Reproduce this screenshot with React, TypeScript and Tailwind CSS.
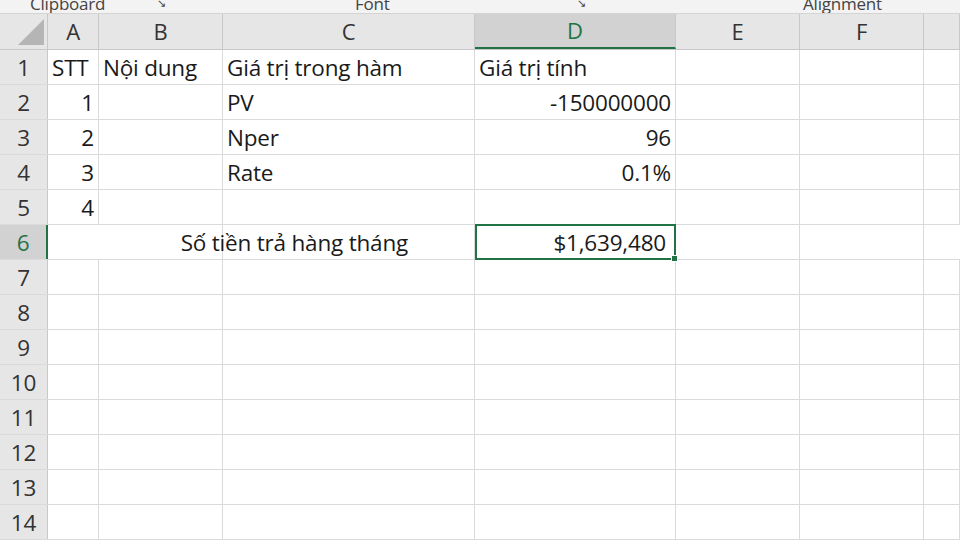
const cols = ['A', 'B', 'C', 'D', 'E', 'F', '']
const widths = ['w-[51px]', 'w-[124px]', 'w-[252px]', 'w-[201px]', 'w-[124px]', 'w-[124px]', 'flex-1']

type Cell = { text?: string; align?: 'left' | 'right' | 'center'; span?: number }

const data: Record<number, Cell[]> = {
  1: [{ text: 'STT' }, { text: 'Nội dung' }, { text: 'Giá trị trong hàm' }, { text: 'Giá trị tính' }],
  2: [{ text: '1', align: 'right' }, {}, { text: 'PV' }, { text: '-150000000', align: 'right' }],
  3: [{ text: '2', align: 'right' }, {}, { text: 'Nper' }, { text: '96', align: 'right' }],
  4: [{ text: '3', align: 'right' }, {}, { text: 'Rate' }, { text: '0.1%', align: 'right' }],
  5: [{ text: '4', align: 'right' }],
}

export default function App() {
  const rows = Array.from({ length: 14 }, (_, i) => i + 1)
  return (
    <div className="w-[960px] h-[540px] overflow-hidden bg-white text-[22.5px] text-[#1a1a1a] tracking-[-0.2px]" style={{ fontFamily: '"Open Sans", sans-serif' }}>
      {/* ribbon group labels, cut off at the top edge */}
      <div className="h-[14px] bg-[#f3f3f3] border-b border-[#d4d4d4] relative overflow-hidden text-[#444] text-[17px] leading-none">
        <span className="absolute left-[30px] -top-[5px]">Clipboard</span>
        <span className="absolute left-[157px] -top-[3px] text-[11px]">↘</span>
        <span className="absolute left-[355px] -top-[5px]">Font</span>
        <span className="absolute left-[577px] -top-[3px] text-[11px]">↘</span>
        <span className="absolute left-[803px] -top-[5px]">Alignment</span>
      </div>
      {/* column headers */}
      <div className="flex h-[36px] bg-[#e6e6e6] border-b border-[#c8c8c8] text-[22px]">
        <div className="w-[48px] border-r border-[#c8c8c8] relative">
          <div className="absolute right-[3px] bottom-[4px] w-0 h-0 border-l-[26px] border-l-transparent border-b-[26px] border-b-[#b5b5b5]" />
        </div>
        {cols.map((c, i) => (
          <div
            key={i}
            className={`${widths[i]} flex items-center justify-center border-r border-[#c8c8c8] ${c === 'D' ? 'bg-[#d2d2d2] text-[#217346] border-b-2 border-b-[#217346]' : 'text-[#333]'}`}
          >
            {c}
          </div>
        ))}
      </div>
      {rows.map((r) => (
        <div key={r} className="flex h-[35px] border-b border-[#dadada]">
          <div className={`w-[48px] flex items-center justify-center pt-[2px] border-r border-[#c8c8c8] ${r === 6 ? 'bg-[#d2d2d2] text-[#217346] border-r-2 border-r-[#217346]' : 'bg-[#e6e6e6] text-[#333]'}`}>
            {r}
          </div>
          {r === 6 ? (
            <>
              <div className="w-[175px] flex items-center justify-end pt-[2px] border-r border-[#dadada] whitespace-nowrap overflow-visible">
                <span className="-mr-[186px] relative z-10">Số tiền trả hàng tháng</span>
              </div>
              <div className="w-[252px] border-r border-[#dadada]" />
              <div className="w-[201px] relative flex items-center justify-end pt-[2px] pr-[8px] border-2 border-[#217346] -my-px">
                $1,639,480
                <div className="absolute -right-[4px] -bottom-[4px] w-[7px] h-[7px] bg-[#217346] border border-white" />
              </div>
              <div className="w-[124px] border-r border-[#dadada]" />
              <div className="w-[124px] border-r border-[#dadada]" />
              <div className="flex-1" />
            </>
          ) : (
            widths.map((w, i) => {
              const cell = data[r]?.[i]
              return (
                <div
                  key={i}
                  className={`${w} flex items-center px-[4px] pt-[2px] border-r border-[#dadada] whitespace-nowrap ${cell?.align === 'right' ? 'justify-end' : 'justify-start'}`}
                >
                  {cell?.text}
                </div>
              )
            })
          )}
        </div>
      ))}
    </div>
  )
}
